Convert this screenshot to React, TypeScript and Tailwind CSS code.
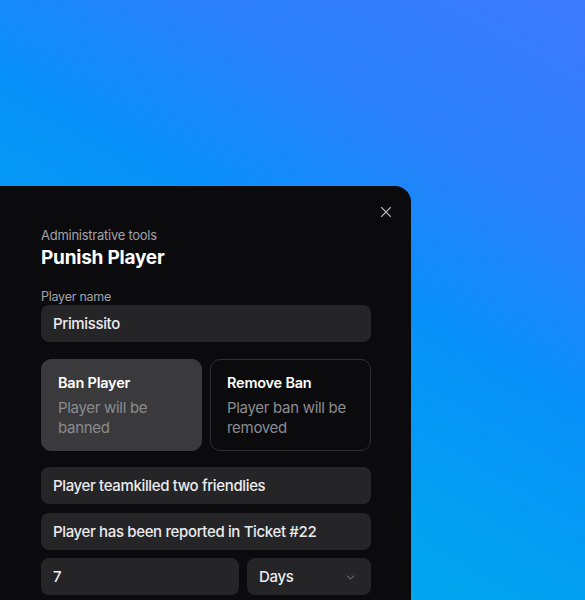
import { ChevronDown, X } from "lucide-react";

function Field({ value, className = "" }: { value: string; className?: string }) {
  return (
    <div
      className={`h-[37px] flex items-center px-3 pt-[2px] rounded-lg bg-[#252528] text-[15px] font-medium tracking-[-0.024em] text-[#ececee] ${className}`}
    >
      {value}
    </div>
  );
}

function OptionCard({ title, text, active }: { title: string; text: string; active?: boolean }) {
  return (
    <div
      className={`h-[92px] rounded-[10px] pl-4 pr-3 pt-[13px] ${
        active ? "bg-[#3a3a3d] border border-[#3a3a3d]" : "border border-[#2f2f33]"
      }`}
    >
      <div className="text-[14.5px] leading-[20px] font-semibold tracking-[-0.015em] text-white">{title}</div>
      <div className="mt-[5px] text-[15px] leading-[20px] tracking-[-0.02em] text-[#8b8b90]">{text}</div>
    </div>
  );
}

export default function App() {
  return (
    <div
      className="relative h-[600px] w-full overflow-hidden bg-[linear-gradient(210deg,#3d79fb_0%,#2a80f9_24%,#0790f8_44%,#02a4f0_70%,#00b4e8_100%)]"
      style={{ fontFamily: "Inter, 'Noto Sans', sans-serif" }}
    >
      <div className="relative mt-[186px] w-[411px] h-[414px] rounded-tr-2xl bg-[#0b0b0d] pl-[41px] pr-[40px] pt-[40px]">
        <button className="absolute top-[17px] right-[16px] text-[#b4b4b8]">
          <X size={18} strokeWidth={1.5} />
        </button>

        <div className="text-[13px] leading-[18px] tracking-[-0.02em] text-[#a3a3a9]">Administrative tools</div>
        <h1 className="mt-[2px] text-[19px] leading-[24px] font-bold tracking-[-0.012em] text-white">Punish Player</h1>

        <div className="mt-[19px] text-[12.5px] leading-[16px] tracking-[-0.02em] text-[#a3a3a9]">Player name</div>
        <Field value="Primissito" />

        <div className="mt-[17px] grid grid-cols-2 gap-2">
          <OptionCard title="Ban Player" text="Player will be banned" active />
          <OptionCard title="Remove Ban" text="Player ban will be removed" />
        </div>

        <Field value="Player teamkilled two friendlies" className="mt-4" />
        <Field value="Player has been reported in Ticket #22" className="mt-[9px]" />

        <div className="mt-2 flex gap-2">
          <Field value="7" className="flex-1" />
          <div className="w-[124px] h-[37px] flex items-center justify-between pl-3 pr-[14px] pt-[2px] rounded-lg bg-[#252528] text-[15px] font-medium tracking-[-0.024em] text-[#ececee]">
            Days
            <ChevronDown size={13} strokeWidth={1.75} className="text-[#8b8b90]" />
          </div>
        </div>
      </div>
    </div>
  );
}
